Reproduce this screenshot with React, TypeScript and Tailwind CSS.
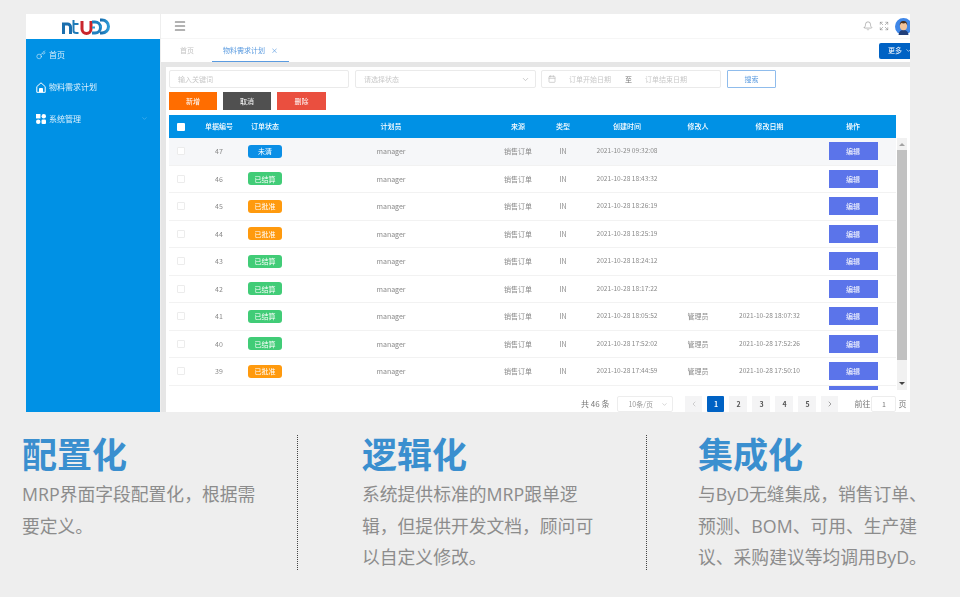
import { Bell, Calendar, ChevronDown, ChevronLeft, ChevronRight, Expand, Key, Menu } from "lucide-react";

const orange = "bg-[#ff9a0e]";
const green = "bg-[#41cc77]";
const blue = "bg-[#0b8fe6]";

const rows = [
  { id: 47, status: "未清", color: blue, created: "2021-10-29 09:32:08" },
  { id: 46, status: "已结算", color: green, created: "2021-10-28 18:43:32" },
  { id: 45, status: "已批准", color: orange, created: "2021-10-28 18:26:19" },
  { id: 44, status: "已批准", color: orange, created: "2021-10-28 18:25:19" },
  { id: 43, status: "已结算", color: green, created: "2021-10-28 18:24:12" },
  { id: 42, status: "已结算", color: green, created: "2021-10-28 18:17:22" },
  { id: 41, status: "已结算", color: green, created: "2021-10-28 18:05:52", editor: "管理员", edited: "2021-10-28 18:07:32" },
  { id: 40, status: "已结算", color: green, created: "2021-10-28 17:52:02", editor: "管理员", edited: "2021-10-28 17:52:26" },
  { id: 39, status: "已批准", color: orange, created: "2021-10-28 17:44:59", editor: "管理员", edited: "2021-10-28 17:50:10" },
];

const gridCols = "grid grid-cols-[24px_52px_40px_212px_42px_48px_80px_62px_81px_86px] items-center text-center";

const features = [
  {
    title: "配置化",
    text: "MRP界面字段配置化，根据需要定义。",
    box: "w-[276px] border-r border-dotted border-[#444]",
    inner: "w-[240px]",
  },
  {
    title: "逻辑化",
    text: "系统提供标准的MRP跟单逻辑，但提供开发文档，顾问可以自定义修改。",
    box: "w-[349px] pl-[64px] border-r border-dotted border-[#444]",
    inner: "w-[232px]",
  },
  {
    title: "集成化",
    text: "与ByD无缝集成，销售订单、预测、BOM、可用、生产建议、采购建议等均调用ByD。",
    box: "w-[262px] pl-[51px]",
    inner: "w-[232px]",
  },
];

const Logo = () => (
  <svg width="48" height="17" viewBox="0 0 48 17" fill="none" strokeWidth="3">
    <defs>
      <linearGradient id="logoBlue" x1="0" y1="0" x2="1" y2="0">
        <stop offset="0" stopColor="#1668a8" />
        <stop offset="1" stopColor="#2b9ad6" />
      </linearGradient>
    </defs>
    <path d="M1.5 16V6h4a3 3 0 0 1 3 3v7" stroke="#1b6fae" />
    <path d="M11.5 2v4h5M11.5 6v7q0 2 3 2h2" stroke="#1d7ab8" strokeWidth="2" />
    <path d="M20 3v8a4.5 4.5 0 0 0 9 0V3" stroke="#c9252c" />
    <path d="M30 4h3a5.5 5.5 0 0 1 0 11h-3" stroke="#1f80bf" />
    <path d="M38 2h2a6.5 6.5 0 0 1 0 13h-2" stroke="url(#logoBlue)" />
    <path d="M30 9.5h3M38 8.5h2" stroke="#2b9ad6" strokeWidth="2" />
  </svg>
);

const HomeIcon = () => (
  <svg width="10" height="11" viewBox="0 0 10 11" fill="none" stroke="white" strokeWidth="1">
    <path d="M5 .8.8 4.6v5.7h8.4V4.6z" />
    <path d="M3.5 10.3V6.5h3v3.8" fill="white" />
  </svg>
);

const GridIcon = () => (
  <svg width="10" height="10" viewBox="0 0 9 9" fill="white">
    <rect x="0" y="0" width="4" height="4" />
    <circle cx="7" cy="2" r="2" />
    <circle cx="2" cy="7" r="2" />
    <rect x="5" y="5" width="4" height="4" rx="1" />
  </svg>
);

const Avatar = () => (
  <svg width="17" height="17" viewBox="0 0 17 17" className="shrink-0">
    <circle cx="8.5" cy="8.5" r="8.5" fill="#3f87e8" />
    <path d="M3.5 17q.5-5 5-5t5 5z" fill="#22407a" />
    <ellipse cx="8.5" cy="8" rx="3.6" ry="4.2" fill="#f1c39b" />
    <path d="M4.8 7.5q-.4-4.5 3.7-4.5t3.7 4.5q-.7-2.3-1.5-2.4-2.2.6-4.4 0-.8.1-1.5 2.4z" fill="#4a2f1d" />
  </svg>
);

const Sidebar = () => (
  <aside className="flex w-[134px] shrink-0 flex-col">
    <div className="flex h-[25px] items-center justify-center bg-white pr-[14px]">
      <Logo />
    </div>
    <nav className="flex-1 bg-[#0091e5] text-[8px] text-[#dcf0fc]">
      <div className="flex h-[32px] items-center gap-[3px] pl-[10px]">
        <Key size={10} color="white" strokeWidth={1.2} />
        <span>首页</span>
      </div>
      <div className="flex h-[32px] items-center gap-[3px] pl-[10px]">
        <HomeIcon />
        <span>物料需求计划</span>
      </div>
      <div className="flex h-[31px] items-center gap-[3px] pl-[10px] pr-[12px]">
        <GridIcon />
        <span>系统管理</span>
        <ChevronDown size={7} color="#5db8ef" className="ml-auto" />
      </div>
    </nav>
  </aside>
);

const TopBar = () => (
  <>
    <header className="flex h-[25px] shrink-0 items-center border-b border-[#f6f6f6] bg-white pl-[12px]">
      <Menu size={14} color="#666" strokeWidth={1.8} />
      <div className="-mr-[2px] ml-auto flex items-center gap-[6px]">
        <Bell size={10} color="#777" strokeWidth={1.2} />
        <Expand size={10} color="#777" strokeWidth={1.2} />
        <Avatar />
      </div>
    </header>
    <div className="flex h-[23px] shrink-0 items-center bg-white text-[7px]">
      <span className="ml-[19px] text-[#c4c4c4]">首页</span>
      <div className="ml-[18px] flex h-full w-[77px] items-center justify-center gap-[6px] border-b-[1.5px] border-[#5a9be0] text-[#5a9be0]">
        <span>物料需求计划</span>
        <span>×</span>
      </div>
      <div className="ml-auto flex h-[16px] w-[31px] shrink-0 items-center gap-[3px] overflow-hidden whitespace-nowrap rounded-l-[2px] bg-[#0062c4] pl-[9px] text-white">
        <span>更多</span>
        <ChevronDown size={7} className="shrink-0" />
      </div>
    </div>
  </>
);

const Filters = () => (
  <>
    <div className="flex h-[18px] text-[7px] text-[#c8c8c8]">
      <div className="flex w-[180px] items-center rounded-[2px] border border-[#eaeaea] pl-[8px]">输入关键词</div>
      <div className="ml-[6px] flex w-[181px] items-center justify-between rounded-[2px] border border-[#eaeaea] pl-[8px] pr-[5px]">
        <span>请选择状态</span>
        <ChevronDown size={9} color="#bbb" />
      </div>
      <div className="ml-[5px] flex w-[180px] items-center rounded-[2px] border border-[#eaeaea] pl-[6px]">
        <Calendar size={8} color="#bbb" />
        <span className="ml-[13px]">订单开始日期</span>
        <span className="ml-[14px] text-[#777]">至</span>
        <span className="ml-[13px]">订单结束日期</span>
      </div>
      <button className="ml-[6px] w-[49px] rounded-[1px] border border-[#8fbcec] text-[#5a9be0]">搜索</button>
    </div>
    <div className="mt-[4px] flex h-[18px] gap-[6px] text-[7px] text-white">
      <button className="w-[48px] bg-[#ff6d00]">新增</button>
      <button className="w-[48px] bg-[#505050]">取消</button>
      <button className="w-[49px] bg-[#ea4f3f]">删除</button>
    </div>
  </>
);

const OrderTable = () => (
  <>
    <div className={`${gridCols} mt-[5px] h-[23px] w-[727px] shrink-0 bg-[#0091e5] text-[7px] font-medium text-white`}>
      <span className="mx-auto h-[8px] w-[8px] rounded-[1px] bg-white" />
      <span>单据编号</span>
      <span>订单状态</span>
      <span>计划员</span>
      <span>来源</span>
      <span>类型</span>
      <span>创建时间</span>
      <span>修改人</span>
      <span>修改日期</span>
      <span>操作</span>
    </div>
    <div className="flex h-[252px] shrink-0 overflow-hidden">
      <div className="w-[727px] shrink-0">
        {rows.map((row, i) => (
          <div
            key={row.id}
            className={`${gridCols} h-[27.5px] border-b border-[#f2f2f2] text-[7px] text-[#8a8a8a] ${i === 0 ? "bg-[#f6f7f9]" : ""}`}
          >
            <span className="mx-auto h-[8px] w-[8px] rounded-[1px] border border-[#ececec] bg-white" />
            <span>{row.id}</span>
            <span className={`mx-auto flex h-[13px] w-[34px] items-center justify-center rounded-[3px] text-white ${row.color}`}>
              {row.status}
            </span>
            <span>manager</span>
            <span>销售订单</span>
            <span>IN</span>
            <span className="whitespace-nowrap text-[6.6px]">{row.created}</span>
            <span>{row.editor}</span>
            <span className="whitespace-nowrap text-[6.6px]">{row.edited}</span>
            <span className="mx-auto flex h-[18px] w-[49px] items-center justify-center bg-[#5b74ea] text-white">编辑</span>
          </div>
        ))}
        <div className={`${gridCols} h-[6px] items-start`}>
          <span className="col-start-10 mx-auto h-[6px] w-[49px] bg-[#5b74ea]" />
        </div>
      </div>
      <div className="ml-px flex w-[10px] flex-col items-center bg-[#f1f1f1]">
        <span className="mt-[5px] h-0 w-0 border-x-[3px] border-b-[3px] border-x-transparent border-b-[#a3a3a3]" />
        <span className="mt-[4px] h-[210px] w-full bg-[#c1c1c1]" />
        <span className="mt-auto mb-[5px] h-0 w-0 border-x-[3px] border-t-[3px] border-x-transparent border-t-[#444]" />
      </div>
    </div>
  </>
);

const Pagination = () => (
  <div className="flex h-[22px] shrink-0 items-end text-[7px] text-[#777]">
    <span className="ml-[412px] flex h-[16px] items-center text-[8px]">共 46 条</span>
    <div className="ml-[8px] flex h-[16px] w-[56px] items-center justify-between rounded-[2px] border border-[#ededed] pl-[10px] pr-[4px] text-[#999]">
      <span>10条/页</span>
      <ChevronDown size={7} color="#bbb" />
    </div>
    <div className="ml-[12px] flex h-[16px] gap-[5px] font-bold">
      <span className="flex w-[17px] items-center justify-center bg-[#f4f4f5]">
        <ChevronLeft size={8} color="#bbb" />
      </span>
      <span className="flex w-[17px] items-center justify-center rounded-[1px] bg-[#0062c4] text-white">1</span>
      {[2, 3, 4, 5].map((n) => (
        <span key={n} className="flex w-[18px] items-center justify-center bg-[#f4f4f5] text-[#555]">
          {n}
        </span>
      ))}
      <span className="flex w-[17px] items-center justify-center bg-[#f4f4f5]">
        <ChevronRight size={8} color="#777" />
      </span>
    </div>
    <span className="ml-[16px] flex h-[16px] items-center text-[8px]">前往</span>
    <span className="ml-[1px] flex h-[16px] w-[25px] items-center justify-center rounded-[2px] border border-[#ededed]">1</span>
    <span className="ml-[2px] flex h-[16px] items-center text-[8px]">页</span>
  </div>
);

const App = () => {
  return (
    <div className="h-[597px] w-[960px] overflow-hidden bg-[#eeeeee] font-['Noto_Sans_CJK_SC','Noto_Sans',sans-serif]">
      <div className="h-[14px]" />
      <div className="ml-[26px] flex h-[398px] w-[884px] overflow-hidden bg-white blur-[0.4px]">
        <Sidebar />
        <main className="flex min-w-0 flex-1 flex-col border-l border-[#eeeeee]">
          <TopBar />
          <div className="flex min-h-0 flex-1 flex-col bg-[#e6e6e6] pl-[5px] pt-[5px]">
            <div className="flex min-h-0 flex-1 flex-col bg-white pl-[3px] pt-[3px]">
              <Filters />
              <OrderTable />
              <Pagination />
            </div>
          </div>
        </main>
      </div>

      <section className="flex pl-[22px] pt-[23px]">
        {features.map((f) => (
          <div key={f.title} className={`h-[135px] ${f.box}`}>
            <h3 className="text-[35px] font-bold leading-[36px] text-[#3a8fcf]">{f.title}</h3>
            <p className={`mt-[8px] font-['Open_Sans','Noto_Sans_CJK_SC',sans-serif] text-[17.8px] leading-[31.5px] text-[#8c8c8c] ${f.inner}`}>
              {f.text}
            </p>
          </div>
        ))}
      </section>
    </div>
  );
};

export default App;
